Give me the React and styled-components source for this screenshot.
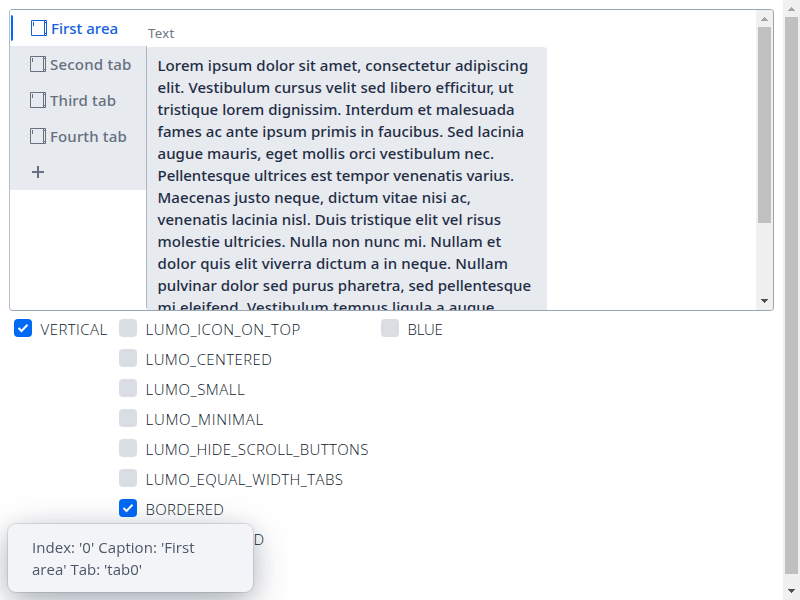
import React from "react";
import styled, { createGlobalStyle } from "styled-components";

const Global = createGlobalStyle`
  * { box-sizing: border-box; }
  html, body { margin: 0; overflow: hidden; background: #fff; }
  body { font-family: "Noto Sans", "Open Sans", sans-serif; color: #1f2d44; }
`;
const Page = styled.div`
  display: flex;
  width: 800px;
  height: 600px;
  overflow: hidden;
`;
const Content = styled.main`
  flex: 1;
  min-width: 0;
  padding: 9px 9px 0;
`;
const TabSheet = styled.section`
  display: flex;
  width: 765px;
  height: 302px;
  border: 1px solid #9aa5b4;
  border-left-color: #b4bcc9;
  border-radius: 4px;
  overflow: hidden;
`;
const TabBar = styled.nav`
  flex: none;
  width: 136px;
`;
const Tab = styled.div`
  display: flex;
  align-items: center;
  height: 36px;
  padding-left: ${(p) => (p.$selected ? 18 : 20)}px;
  border-left: ${(p) => (p.$selected ? "3px solid #fff" : "0")};
  background: ${(p) => (p.$selected ? "#fff" : "#e7eaef")};
  color: ${(p) => (p.$selected ? "#1262e0" : "#667080")};
  position: relative;
  svg { flex: none; }
`;
const Marker = styled.i`
  position: absolute;
  left: -2px;
  top: 5px;
  width: 2px;
  height: 26px;
  border-radius: 0 2px 2px 0;
  background: #006af5;
`;
const TabLabel = styled.span`
  margin-left: 4px;
  font-size: 15px;
  font-weight: 500;
  line-height: 22px;
  letter-spacing: ${(p) => p.$track || 0}px;
  white-space: nowrap;
`;
const Body = styled.div`
  flex: 1;
  min-width: 0;
  display: flex;
  flex-direction: column;
`;
const FieldLabel = styled.label`
  height: 36px;
  padding: 14px 0 0 2px;
  font-size: 13px;
  line-height: 18px;
  letter-spacing: 0.4px;
  color: #6b7482;
`;
const AreaFrame = styled.div`
  flex: 1;
  min-height: 0;
  border-left: 1px solid #abb5c4;
  border-radius: 0 0 0 4px;
  padding-top: 1px;
  overflow: hidden;
`;
const TextArea = styled.div`
  width: 400px;
  height: 320px;
  padding: 7px 0 0 10.5px;
  border-radius: 4px;
  background: #e7eaef;
`;
const Line = styled.div`
  width: max-content;
  font-size: 15px;
  font-weight: 500;
  line-height: 22px;
  white-space: nowrap;
  letter-spacing: ${(p) => p.$track || 0}px;
`;
const ScrollTrack = styled.div`
  flex: none;
  display: flex;
  flex-direction: column;
  align-items: center;
  width: 17px;
  background: #f0f0f0;
  svg { flex: none; display: block; }
`;
const Thumb = styled.div`
  width: 13px;
  height: ${(p) => p.$size}px;
  margin-bottom: auto;
  background: #c0c0c0;
`;
const Options = styled.div`
  display: flex;
  padding: 3px 0 0 5px;
`;
const Group = styled.div`
  flex: none;
  width: ${(p) => p.$width}px;
`;
const Option = styled.div`
  display: flex;
  align-items: center;
  height: 30px;
`;
const Box = styled.span`
  flex: none;
  display: grid;
  place-items: center;
  width: 18px;
  height: 18px;
  margin-top: -3px;
  border-radius: 4px;
  background: ${(p) => (p.$on ? "#006af5" : "#dadde3")};
`;
const OptionLabel = styled.span`
  margin-left: 8.6px;
  padding-bottom: 1px;
  font-family: "Open Sans", sans-serif;
  font-size: 15px;
  font-weight: 350;
  color: #0c1729;
  white-space: nowrap;
  letter-spacing: ${(p) => p.$track || 0}px;
`;
const PartialLabel = styled(OptionLabel)`
  margin-left: 134.5px;
`;
const Toast = styled.aside`
  position: fixed;
  left: 8px;
  top: 524px;
  width: 245px;
  height: 68px;
  padding: 12px 24px;
  border-radius: 8px;
  background: #f3f4f7;
  box-shadow: 0 0 0 1px rgba(31, 45, 68, 0.12), 0 6px 24px -1px rgba(31, 45, 68, 0.24),
    0 12px 48px -6px rgba(31, 45, 68, 0.3);
  color: #4b5768;
`;
const ToastLine = styled.div`
  width: max-content;
  font-family: "Open Sans", sans-serif;
  font-size: 15px;
  font-weight: 400;
  line-height: 22px;
  white-space: nowrap;
  letter-spacing: ${(p) => p.$track || 0}px;
`;

const FormIcon = () => (
  <svg width="16" height="16" viewBox="0 0 16 16" fill="none" stroke="currentColor">
    <path d="M0.5 0.5h15v15H0.5zM13.5 0.5v15M2.5 2v4M14 2.5h1M14 13.5h1" />
  </svg>
);
const PlusIcon = () => (
  <svg width="16" height="16" viewBox="0 0 16 16" fill="currentColor">
    <path d="M7 2h2v5h5v2H9v5H7V9H2V7h5z" />
  </svg>
);
const Arrow = ({ down }) => (
  <svg width="17" height="17" viewBox="0 0 17 17" shapeRendering="crispEdges">
    {down ? (
      <path fill="#505050" d="M5 6h7v1h-1v1h-1v1H9v1H8V9H7V8H6V7H5z" />
    ) : (
      <path fill="#a3a3a3" d="M8 7h1v1h1v1h1v1h1v1H5v-1h1V9h1V8h1z" />
    )}
  </svg>
);
const Scrollbar = ({ size }) => (
  <ScrollTrack>
    <Arrow />
    <Thumb $size={size} />
    <Arrow down />
  </ScrollTrack>
);
const Check = ({ on, label, track }) => (
  <Option>
    <Box $on={on}>
      {on && (
        <svg width="18" height="18" viewBox="0 0 18 18" fill="none" stroke="#fff" strokeWidth="2">
          <path d="M4.5 9l3 3 6-6.3" />
        </svg>
      )}
    </Box>
    <OptionLabel $track={track}>{label}</OptionLabel>
  </Option>
);

const lines = [
  ["Lorem ipsum dolor sit amet, consectetur adipiscing", 0.06],
  ["elit. Vestibulum cursus velit sed libero efficitur, ut", 0.08],
  ["tristique lorem dignissim. Interdum et malesuada", 0.02],
  ["fames ac ante ipsum primis in faucibus. Sed lacinia", 0.06],
  ["augue mauris, eget mollis orci vestibulum nec.", 0.06],
  ["Pellentesque ultrices est tempor venenatis varius.", -0.02],
  ["Maecenas justo neque, dictum vitae nisi ac,", 0.07],
  ["venenatis lacinia nisl. Duis tristique elit vel risus", 0.04],
  ["molestie ultricies. Nulla non nunc mi. Nullam et", 0.08],
  ["dolor quis elit viverra dictum a in neque. Nullam", 0.12],
  ["pulvinar dolor sed purus pharetra, sed pellentesque", 0.03],
  ["mi eleifend. Vestibulum tempus ligula a augue", 0.1],
];
const themes = [
  ["LUMO_ICON_ON_TOP", 0.5],
  ["LUMO_CENTERED", 0.4],
  ["LUMO_SMALL", 0.5],
  ["LUMO_MINIMAL", 0.68],
  ["LUMO_HIDE_SCROLL_BUTTONS", 0.36],
  ["LUMO_EQUAL_WIDTH_TABS", 0.39],
  ["BORDERED", 0.27, true],
];

export default function App() {
  return (
    <Page>
      <Global />
      <Content>
        <TabSheet>
          <TabBar>
            <Tab $selected>
              <Marker />
              <FormIcon />
              <TabLabel>First area</TabLabel>
            </Tab>
            <Tab><FormIcon /><TabLabel $track={0.2}>Second tab</TabLabel></Tab>
            <Tab><FormIcon /><TabLabel $track={0.15}>Third tab</TabLabel></Tab>
            <Tab><FormIcon /><TabLabel $track={0.13}>Fourth tab</TabLabel></Tab>
            <Tab><PlusIcon /></Tab>
          </TabBar>
          <Body>
            <FieldLabel>Text</FieldLabel>
            <AreaFrame>
              <TextArea>
                {lines.map(([text, track]) => (
                  <Line key={text} $track={track}>{text}</Line>
                ))}
              </TextArea>
            </AreaFrame>
          </Body>
          <Scrollbar size={196} />
        </TabSheet>
        <Options>
          <Group $width={105}><Check on label="VERTICAL" track={0.45} /></Group>
          <Group $width={262}>
            {themes.map(([label, track, on]) => (
              <Check key={label} label={label} track={track} on={on} />
            ))}
            <Option><PartialLabel>D</PartialLabel></Option>
          </Group>
          <Group $width={100}><Check label="BLUE" track={-0.3} /></Group>
        </Options>
      </Content>
      <Scrollbar size={557} />
      <Toast>
        <ToastLine $track={0.05}>Index: '0' Caption: 'First</ToastLine>
        <ToastLine>area' Tab: 'tab0'</ToastLine>
      </Toast>
    </Page>
  );
}
